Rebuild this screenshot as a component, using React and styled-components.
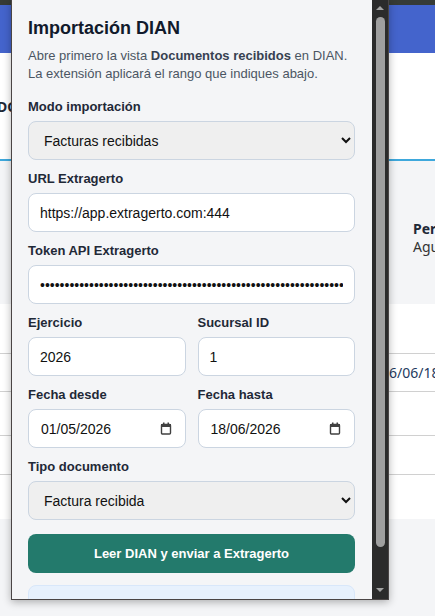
import styled, { createGlobalStyle } from "styled-components";

const GlobalStyle = createGlobalStyle`
  html, body {
    margin: 0;
    padding: 0;
    overflow: hidden;
    background: #f4f5f7;
  }
`;

const Page = styled.div`
  position: relative;
  width: 435px;
  height: 616px;
  overflow: hidden;
  font-family: "Noto Sans", "Open Sans", sans-serif;
  background: #f4f5f7;
`;

const TopStrip = styled.div`
  height: 5px;
  background: #363b36;
`;

const Header = styled.div`
  height: 48px;
  background: #4464cc;
`;

const TitleBand = styled.div`
  height: 106px;
  background: #fff;
  display: flex;
  align-items: center;
  border-bottom: 2px solid #3ea8dc;
  font-weight: 700;
  font-size: 14px;
  color: #1f2937;
  text-indent: -3px;
`;

const Summary = styled.div`
  height: 143px;
  display: grid;
  grid-template-columns: 413px 1fr;
  padding-top: 59px;
  box-sizing: border-box;
  font-size: 14px;
  line-height: 18px;
  color: #333;
  white-space: nowrap;

  b {
    display: block;
    color: #1f2937;
  }
`;

const Table = styled.div`
  background: #fff;
`;

const Row = styled.div`
  height: ${(p) => p.$h}px;
  display: grid;
  grid-template-columns: 381px 1fr;
  align-items: center;
  border-bottom: ${(p) => (p.$last ? "none" : "1px solid #d0d0d0")};
  box-sizing: border-box;
  font-size: 14px;
  color: #243a5e;
  white-space: nowrap;
  overflow: hidden;
`;

/* extension popup */

const Popup = styled.div`
  position: absolute;
  top: 0;
  left: 11px;
  width: 378px;
  height: 600px;
  box-sizing: border-box;
  display: flex;
  border: 1px solid #4a4545;
  border-top: none;
  background: #f4f5f7;
  box-shadow: 0 2px 8px rgba(0, 0, 0, 0.3);
  font-family: "Liberation Sans", Arial, sans-serif;
`;

const Content = styled.div`
  flex: 1;
  overflow: hidden;
  padding: 17px 17px 0 16px;
`;

const Title = styled.h1`
  margin: 0;
  font-size: 18px;
  line-height: 22px;
  font-weight: 700;
  color: #111a2c;
`;

const Intro = styled.p`
  margin: 8px 0 0;
  font-size: 13px;
  line-height: 18px;
  color: #4b5563;

  b {
    color: #374151;
  }
`;

const Form = styled.div`
  display: flex;
  flex-direction: column;
  gap: 11px;
  margin-top: 16px;
`;

const Pair = styled.div`
  display: grid;
  grid-template-columns: 1fr 1fr;
  column-gap: 12px;
`;

const Field = styled.label`
  display: flex;
  flex-direction: column;
  min-width: 0;
`;

const Label = styled.span`
  font-size: 13px;
  line-height: 16px;
  font-weight: 700;
  color: #1f2937;
  margin-bottom: 6px;
`;

const Input = styled.input`
  height: 39px;
  box-sizing: border-box;
  width: 100%;
  border: 1px solid #cbd5e1;
  border-radius: 8px;
  background: #fff;
  padding: 0 11px;
  font-family: "Liberation Sans", Arial, sans-serif;
  font-size: 14px;
  color: #111;
`;

const DateBox = styled.div`
  height: 39px;
  box-sizing: border-box;
  display: flex;
  align-items: center;
  gap: 6px;
  border: 1px solid #cbd5e1;
  border-radius: 8px;
  background: #fff;
  padding: 0 13px 0 12px;

  input {
    flex: 1;
    min-width: 0;
    border: none;
    outline: none;
    padding: 0;
    background: transparent;
    font-family: "Liberation Sans", Arial, sans-serif;
    font-size: 14px;
    color: #111;
  }
`;

const Select = styled.select`
  height: 39px;
  box-sizing: border-box;
  width: 100%;
  border: 1px solid #cbd5e1;
  border-radius: 8px;
  background-color: #efefef;
  padding: 0 8px 0 11px;
  font-family: "Liberation Sans", Arial, sans-serif;
  font-size: 14px;
  color: #111;
`;

const Button = styled.button`
  margin-top: 3px;
  height: 39px;
  border: none;
  border-radius: 8px;
  background: #237a6c;
  color: #fff;
  font-family: "Liberation Sans", Arial, sans-serif;
  font-size: 13px;
  font-weight: 700;
`;

const Notice = styled.div`
  margin-top: 12px;
  height: 60px;
  border: 1px solid #d8e7fa;
  border-radius: 8px;
  background: #e7f1fd;
`;

const Scrollbar = styled.div`
  width: 16px;
  background: #2b2b2b;
  display: flex;
  flex-direction: column;
  align-items: center;
  padding: 6px 0 7px;
  box-sizing: border-box;
`;

const Arrow = styled.div`
  width: 0;
  height: 0;
  border-left: 4px solid transparent;
  border-right: 4px solid transparent;
  ${(p) =>
    p.$down
      ? "border-top: 4px solid #a3a3a3;"
      : "border-bottom: 4px solid #a3a3a3;"}
`;

const Thumb = styled.div`
  flex: 1;
  width: 9px;
  margin: 7px 0 41px;
  border-radius: 5px;
  background: #9f9f9f;
`;

const CalendarIcon = () => (
  <svg width="12" height="13" viewBox="0 0 12 13" fill="none">
    <rect x="1.5" y="2.5" width="9" height="9.5" rx="1" stroke="#404040" strokeWidth="1.4" />
    <rect x="1" y="2" width="10" height="3" fill="#404040" />
    <rect x="3" y="0.5" width="1.5" height="2.5" fill="#404040" />
    <rect x="7.5" y="0.5" width="1.5" height="2.5" fill="#404040" />
  </svg>
);

const DateField = ({ label, value }) => (
  <Field>
    <Label>{label}</Label>
    <DateBox>
      <input type="text" defaultValue={value} />
      <CalendarIcon />
    </DateBox>
  </Field>
);

export default function App() {
  return (
    <Page>
      <GlobalStyle />
      <TopStrip />
      <Header />
      <TitleBand>DOCUMENTOS</TitleBand>
      <Summary>
        <span />
        <div>
          <b>Periodo</b>
          Aguachica
        </div>
      </Summary>
      <Table>
        <Row $h={50} />
        <Row $h={38}>
          <span />
          <span>16/06/18</span>
        </Row>
        <Row $h={44} />
        <Row $h={39} />
        <Row $h={44} $last />
      </Table>

      <Popup>
        <Content>
          <Title>Importación DIAN</Title>
          <Intro>
            Abre primero la vista <b>Documentos recibidos</b> en DIAN.
            <br />
            La extensión aplicará el rango que indiques abajo.
          </Intro>
          <Form>
            <Field>
              <Label>Modo importación</Label>
              <Select defaultValue="recibidas">
                <option value="recibidas">Facturas recibidas</option>
                <option value="emitidas">Facturas emitidas</option>
              </Select>
            </Field>
            <Field>
              <Label>URL Extragerto</Label>
              <Input type="text" defaultValue="https://app.extragerto.com:444" />
            </Field>
            <Field>
              <Label>Token API Extragerto</Label>
              <Input type="password" defaultValue={"x".repeat(96)} />
            </Field>
            <Pair>
              <Field>
                <Label>Ejercicio</Label>
                <Input type="text" defaultValue="2026" />
              </Field>
              <Field>
                <Label>Sucursal ID</Label>
                <Input type="text" defaultValue="1" />
              </Field>
            </Pair>
            <Pair>
              <DateField label="Fecha desde" value="01/05/2026" />
              <DateField label="Fecha hasta" value="18/06/2026" />
            </Pair>
            <Field>
              <Label>Tipo documento</Label>
              <Select defaultValue="factura">
                <option value="factura">Factura recibida</option>
                <option value="nota">Nota crédito</option>
              </Select>
            </Field>
            <Button type="button">Leer DIAN y enviar a Extragerto</Button>
          </Form>
          <Notice />
        </Content>
        <Scrollbar>
          <Arrow />
          <Thumb />
          <Arrow $down />
        </Scrollbar>
      </Popup>
    </Page>
  );
}
